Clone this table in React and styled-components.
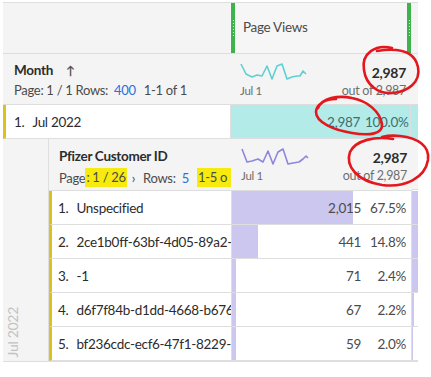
import React from 'react';
import styled, { createGlobalStyle } from 'styled-components';

const GlobalStyle = createGlobalStyle`
  body {
    margin: 0;
    background: #fff;
    font-family: Lato, "Open Sans", sans-serif;
    color: #2c2c2c;
    letter-spacing: -0.3px;
  }
`;

const colors = {
  grey: '#f4f4f4',
  line: '#dedede',
  yellow: '#dcc21c',
  cyan: '#b3ebe9',
  purple: '#cbc7ef',
  green: '#3fb24b',
  blue: '#2f6fd6',
  highlight: '#f6ea0f',
  red: '#e3171d',
};

const Page = styled.div`
  position: relative;
  width: 431px;
  height: 377px;
  padding: 2px 0 0 3px;
  box-sizing: border-box;
`;

const Table = styled.div`
  width: 415px;
  overflow: hidden;
  border-top: 1px solid ${colors.line};
  border-bottom: 1px solid ${colors.line};
  display: grid;
  grid-template-columns: 227px 181px 7px;
`;

const Cell = styled.div`
  background: ${p => p.$bg || '#fff'};
  border-bottom: 1px solid ${colors.line};
  box-sizing: border-box;
  min-width: 0;
`;

const HeaderCell = styled(Cell)`
  height: 51px;
  background: ${colors.grey};
`;

const MetricHead = styled(HeaderCell)`
  display: flex;
  align-items: stretch;
  background: #f6f6f6;
`;

const Handle = styled.div`
  width: 4px;
  background: ${colors.green};
  display: flex;
  flex-direction: column;
  align-items: center;
  justify-content: center;
  gap: 2px;
  margin-left: ${p => (p.$right ? 'auto' : '1px')};
  span {
    width: 1px;
    height: 1px;
    background: #d6f0d8;
  }
`;

const HeadLabel = styled.div`
  padding: 16px 0 0 8px;
  font-size: 13.5px;
  color: #4b4b4b;
`;

const DimHead = styled(Cell)`
  height: ${p => p.$h || 51}px;
  background: ${colors.grey};
  padding: ${p => p.$pad || '7px 0 0 11px'};
  overflow: visible;
  white-space: nowrap;
  position: relative;
  z-index: 1;
`;

const DimTitle = styled.div`
  font-size: 13.5px;
  font-weight: 700;
  color: #2c2c2c;
  height: 18px;
  display: flex;
  align-items: center;
  gap: 13px;
`;

const Arrow = styled.span`
  font-size: 12px;
  font-weight: 700;
  color: #555;
`;

const Paging = styled.div`
  font-size: 13px;
  color: #4b4b4b;
  margin-top: 3px;
  display: flex;
  align-items: center;
`;

const Blue = styled.span`
  color: ${colors.blue};
  margin: 0 8px 0 ${p => p.$l || 6}px;
`;

const Mark = styled.span`
  background: ${colors.highlight};
  padding: 1px 1px 2px;
`;

const Chevron = styled.span`
  margin: 0 8px 0 5px;
  font-size: 13px;
`;

const SummaryCell = styled(Cell)`
  height: ${p => p.$h || 51}px;
  background: ${colors.grey};
  display: flex;
  justify-content: space-between;
  padding: 9px 5px 0 10px;
`;

const Spark = styled.div`
  display: flex;
  flex-direction: column;
  gap: 3px;
  font-size: 11.5px;
  color: #6e6e6e;
  svg {
    display: block;
  }
`;

const Totals = styled.div`
  text-align: right;
  padding-top: 2px;
  line-height: 16px;
  strong {
    display: block;
    font-size: 14px;
    color: #2c2c2c;
  }
  span {
    font-size: 12.5px;
    color: #6e6e6e;
  }
`;

const RowLabel = styled(Cell)`
  height: 34px;
  border-left: 3px solid ${colors.yellow};
  padding-left: ${p => p.$pad || 8}px;
  display: flex;
  align-items: center;
  font-size: 13.5px;
  color: #2c2c2c;
  white-space: nowrap;
  overflow: hidden;
`;

const Num = styled.span`
  margin-right: 8px;
`;

const ValueCell = styled(Cell)`
  height: 34px;
  position: relative;
  display: flex;
  align-items: center;
  justify-content: flex-end;
  padding-right: 5px;
  font-size: 13.5px;
  color: #4b4b4b;
  background: ${p => p.$bg || '#fff'};
  border-left: 1px solid ${colors.line};
  border-right: 1px solid ${colors.line};
`;

const Bar = styled.div`
  position: absolute;
  left: 0;
  top: 0;
  bottom: 0;
  background: ${colors.purple};
`;

const NextBar = styled.div`
  height: 100%;
  background: ${colors.purple};
`;

const Value = styled.span`
  position: relative;
  color: ${p => p.$c || '#4b4b4b'};
`;

const Pct = styled(Value)`
  width: 40px;
  margin-left: 5px;
  text-align: right;
`;

const Nested = styled.div`
  grid-column: 1 / -1;
  display: grid;
  grid-template-columns: 45px 1fr;
`;

const Strip = styled.div`
  background: ${colors.grey};
  display: flex;
  align-items: flex-end;
  padding: 0 0 4px 1px;
`;

const StripText = styled.span`
  writing-mode: vertical-rl;
  transform: rotate(180deg);
  font-size: 14px;
  color: #c2c2c2;
`;

const Inner = styled.div`
  display: grid;
  grid-template-columns: 182px 181px 7px;
  border-left: 1px solid ${colors.line};
`;

const Annotations = styled.svg`
  position: absolute;
  left: 0;
  top: 0;
  pointer-events: none;
  z-index: 5;
`;

const sparkPts =
  'M1 1 L6 11 L12 14 L17 12 L22 13 L27 3 L32 16 L37 3 L42 1 L47 16 L52 14 L57 13 L60 13 L63 8 L66 11';
const sparkPts2 =
  'M1 1 L6 14 L11 13 L17 11 L22 14 L27 3 L32 16 L37 4 L42 1 L47 16 L52 15 L58 14 L62 11 L65 8 L67 10';

const Sparkline = ({ d, color }) => (
  <svg width="70" height="18" viewBox="0 0 70 18">
    <path d={d} fill="none" stroke={color} strokeWidth="1.6" strokeLinejoin="round" />
  </svg>
);

const rows = [
  { label: 'Unspecified', value: '2,015', pct: '67.5%', w: 67.5, next: 7 },
  { label: '2ce1b0ff-63bf-4d05-89a2-9f0c', value: '441', pct: '14.8%', w: 14.8, next: 7 },
  { label: '-1', value: '71', pct: '2.4%', w: 2.4, next: 7 },
  { label: 'd6f7f84b-d1dd-4668-b676-4a2e', value: '67', pct: '2.2%', w: 2.2, next: 2 },
  { label: 'bf236cdc-ecf6-47f1-8229-b1a0', value: '59', pct: '2.0%', w: 2.0, next: 1 },
];

function Handles() {
  return [0, 1, 2, 3, 4, 5].map(i => <span key={i} />);
}

export default function App() {
  return (
    <Page>
      <GlobalStyle />
      <Table>
        <HeaderCell />
        <MetricHead>
          <Handle>
            <Handles />
          </Handle>
          <HeadLabel>Page Views</HeadLabel>
          <Handle $right>
            <Handles />
          </Handle>
        </MetricHead>
        <HeaderCell />

        <DimHead>
          <DimTitle>
            Month <Arrow>↑</Arrow>
          </DimTitle>
          <Paging>
            Page: 1 / 1 Rows: <Blue>400</Blue>1-1 of 1
          </Paging>
        </DimHead>
        <SummaryCell>
          <Spark>
            <Sparkline d={sparkPts} color="#5fd0d2" />
            Jul 1
          </Spark>
          <Totals>
            <strong>2,987</strong>
            <span>out of 2,987</span>
          </Totals>
        </SummaryCell>
        <HeaderCell />

        <RowLabel>
          <Num>1.</Num>Jul 2022
        </RowLabel>
        <ValueCell $bg={colors.cyan}>
          <Value $c="#3e6e70">2,987</Value>
          <Pct $c="#3e6e70">100.0%</Pct>
        </ValueCell>
        <Cell $bg={colors.cyan} />

        <Nested>
          <Strip>
            <StripText>Jul 2022</StripText>
          </Strip>
          <Inner>
            <DimHead $h={52} $pad="8px 0 0 10px">
              <DimTitle>Pfizer Customer ID</DimTitle>
              <Paging>
                Page<Mark>: 1 / 26</Mark>
                <Chevron>›</Chevron>Rows: <Blue $l={6}>5</Blue>
                <Mark>1-5 o&nbsp;</Mark>
              </Paging>
            </DimHead>
            <SummaryCell $h={52}>
              <Spark>
                <Sparkline d={sparkPts2} color="#8d86db" />
                Jul 1
              </Spark>
              <Totals>
                <strong>2,987</strong>
                <span>out of 2,987</span>
              </Totals>
            </SummaryCell>
            <HeaderCell />

            {rows.map((r, i) => (
              <React.Fragment key={r.label}>
                <RowLabel $pad={6}>
                  <Num>{i + 1}.</Num>
                  {r.label}
                </RowLabel>
                <ValueCell>
                  <Bar style={{ width: `${Math.max(r.w, 2.2)}%` }} />
                  <Value>{r.value}</Value>
                  <Pct>{r.pct}</Pct>
                </ValueCell>
                <Cell>
                  <NextBar style={{ width: `${r.next}px` }} />
                </Cell>
              </React.Fragment>
            ))}
          </Inner>
        </Nested>
      </Table>

      <Annotations width="431" height="377" viewBox="0 0 431 377">
        <g fill="none" stroke={colors.red} strokeWidth="2.6" strokeLinecap="round">
          <path d="M392 48 C376 44 361 53 364 70 C366 85 378 94 392 93 C408 92 421 82 418 67 C415 53 402 47 377 51" />
          <path d="M318 108 C322 98 338 95 352 98 C368 101 380 112 382 124 C383 134 370 136 352 133 C333 130 316 122 316 112 C316 104 326 99 336 99" />
          <path d="M393 139 C375 136 356 140 350 152 C345 166 357 181 382 185 C405 188 425 178 428 160 C430 146 418 138 400 136 C392 135 386 136 382 137" />
        </g>
      </Annotations>
    </Page>
  );
}
